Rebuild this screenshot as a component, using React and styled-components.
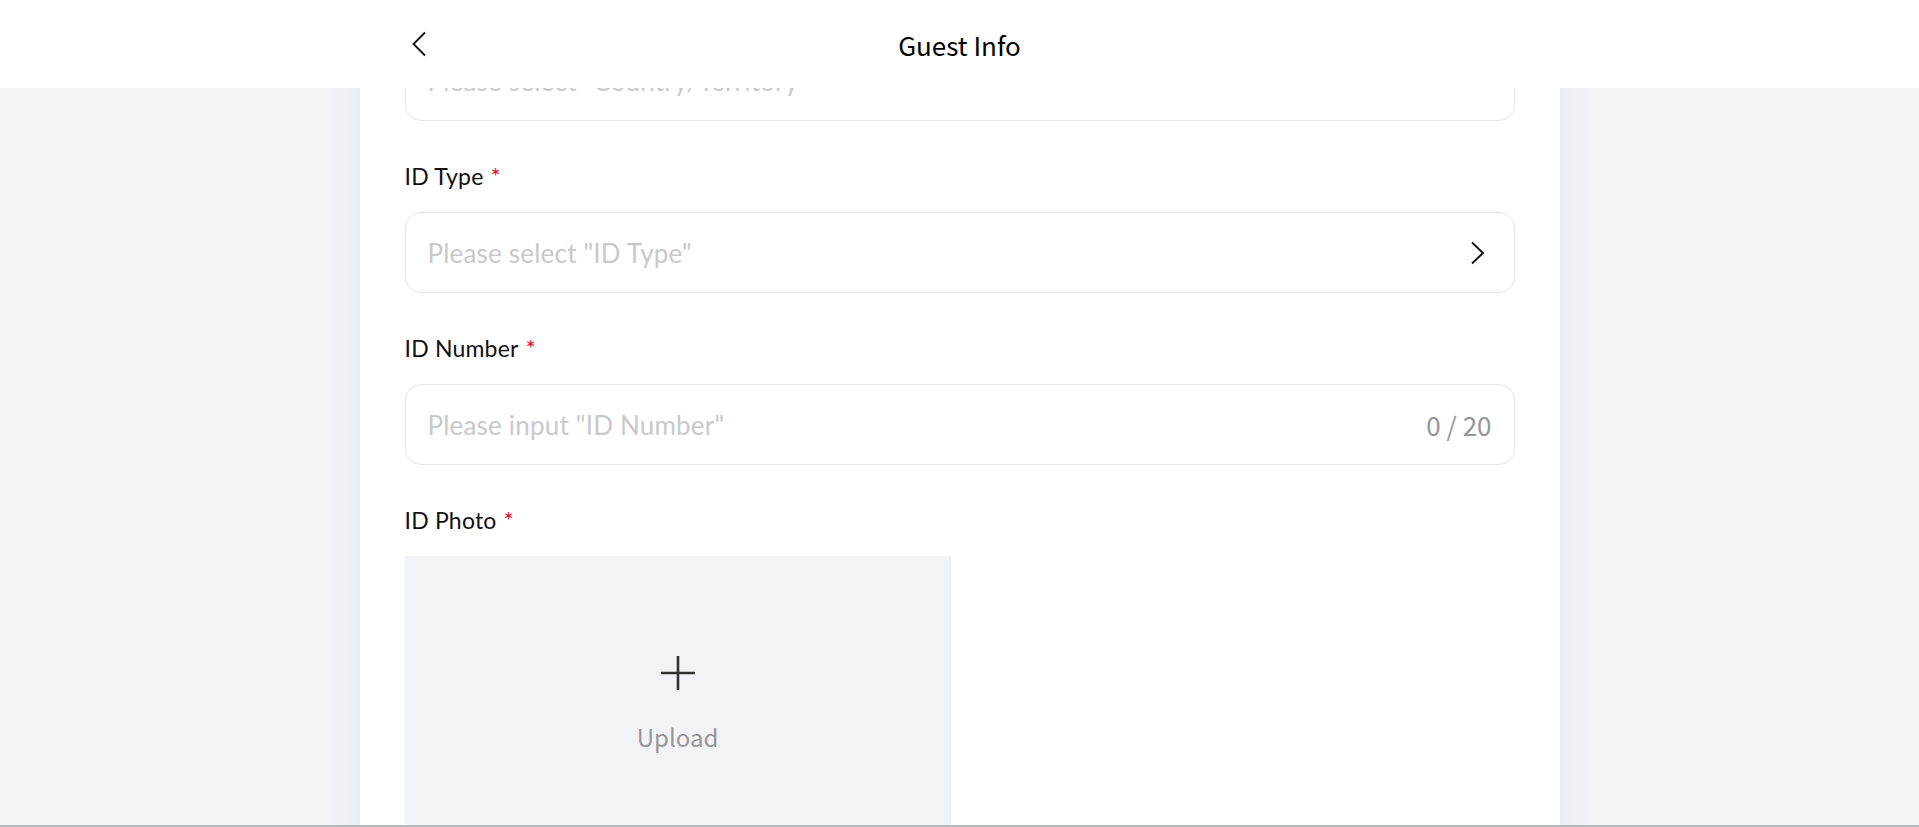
import React from "react";
import styled, { createGlobalStyle } from "styled-components";

const GlobalStyle = createGlobalStyle`
    * { box-sizing: border-box; }
    html, body {
        margin: 0;
        padding: 0;
        background: #f2f3f7;
        font-family: Lato, "Noto Sans", sans-serif;
        overflow: hidden;
    }
`

const Header = styled.div`
    position: fixed;
    top: 0;
    left: 0;
    right: 0;
    height: 88px;
    background: #fff;
    z-index: 10;
    display: flex;
    justify-content: center;
`

const HeaderInner = styled.div`
    width: 1200px;
    padding: 0 45px;
    display: flex;
    align-items: center;
    position: relative;
`

const BackButton = styled.div`
    width: 30px;
    height: 30px;
    display: flex;
    align-items: center;
    margin-left: 5px;
    margin-top: -1px;
`

const HeaderTitle = styled.div`
    position: absolute;
    left: 0;
    right: 0;
    text-align: center;
    font-family: "Noto Sans CJK SC", "Noto Sans", sans-serif;
    font-size: 26px;
    color: #000;
    pointer-events: none;
`

const Page = styled.div`
    width: 1200px;
    min-height: 827px;
    margin: 0 auto;
    background: #fff;
    padding: 40px 45px 0;
    box-shadow: 0 0 36px rgba(90, 105, 200, 0.09);
`

const Field = styled.div`
    margin-bottom: 40px;
`

const Label = styled.div`
    font-size: 23px;
    line-height: 30px;
    color: #111;
    margin-bottom: 21px;
    letter-spacing: 0.2px;
`

const Star = styled.span`
    color: #ee0a24;
    margin-left: 7px;
    font-size: 24px;
`

const InputBox = styled.div`
    height: 81px;
    border: 1px solid #e6e7eb;
    border-radius: 16px;
    padding: 0 28px 0 22px;
    display: flex;
    align-items: center;
    justify-content: space-between;
`

const Placeholder = styled.span`
    font-size: 26px;
    letter-spacing: 0.2px;
    color: #c8c9cc;
`

const Counter = styled.span`
    font-family: "Noto Sans CJK SC", "Noto Sans", sans-serif;
    font-size: 26px;
    color: #93969b;
    margin-right: -6px;
`

const UploadBox = styled.div`
    width: 546px;
    height: 300px;
    background: #f2f3f6;
    display: flex;
    flex-direction: column;
    align-items: center;
    padding-top: 99px;
`

const UploadText = styled.div`
    font-family: "Noto Sans CJK SC", "Noto Sans", sans-serif;
    font-size: 24px;
    color: #969799;
    margin-top: 28px;
`

const BottomLine = styled.div`
    position: fixed;
    left: 0;
    right: 0;
    bottom: 0;
    height: 2px;
    background: #b3bbbf;
    z-index: 20;
`

function ChevronLeft() {
    return (
        <svg width="18" height="26" viewBox="0 0 18 26">
            <path d="M15 1.5 L3.5 13 L15 24.5" fill="none" stroke="#111" strokeWidth="1.8" />
        </svg>
    )
}

function ChevronRight() {
    return (
        <svg width="16" height="24" viewBox="0 0 16 24">
            <path d="M2 1.5 L13 12 L2 22.5" fill="none" stroke="#111" strokeWidth="1.9" />
        </svg>
    )
}

function Plus() {
    return (
        <svg width="36" height="36" viewBox="0 0 36 36">
            <path d="M18 1 V35 M1 18 H35" fill="none" stroke="#323233" strokeWidth="2.6" />
        </svg>
    )
}

function App() {
    return (
        <>
            <GlobalStyle />
            <Header>
                <HeaderInner>
                    <BackButton><ChevronLeft /></BackButton>
                    <HeaderTitle>Guest Info</HeaderTitle>
                </HeaderInner>
            </Header>

            <Page>
                <Field>
                    <InputBox>
                        <Placeholder>Please select "Country/Territory"</Placeholder>
                    </InputBox>
                </Field>

                <Field>
                    <Label>ID Type<Star>*</Star></Label>
                    <InputBox>
                        <Placeholder>Please select "ID Type"</Placeholder>
                        <ChevronRight />
                    </InputBox>
                </Field>

                <Field>
                    <Label>ID Number<Star>*</Star></Label>
                    <InputBox>
                        <Placeholder>Please input "ID Number"</Placeholder>
                        <Counter>0 / 20</Counter>
                    </InputBox>
                </Field>

                <Field>
                    <Label>ID Photo<Star>*</Star></Label>
                    <UploadBox>
                        <Plus />
                        <UploadText>Upload</UploadText>
                    </UploadBox>
                </Field>
            </Page>
            <BottomLine />
        </>
    )
}

export default App;
